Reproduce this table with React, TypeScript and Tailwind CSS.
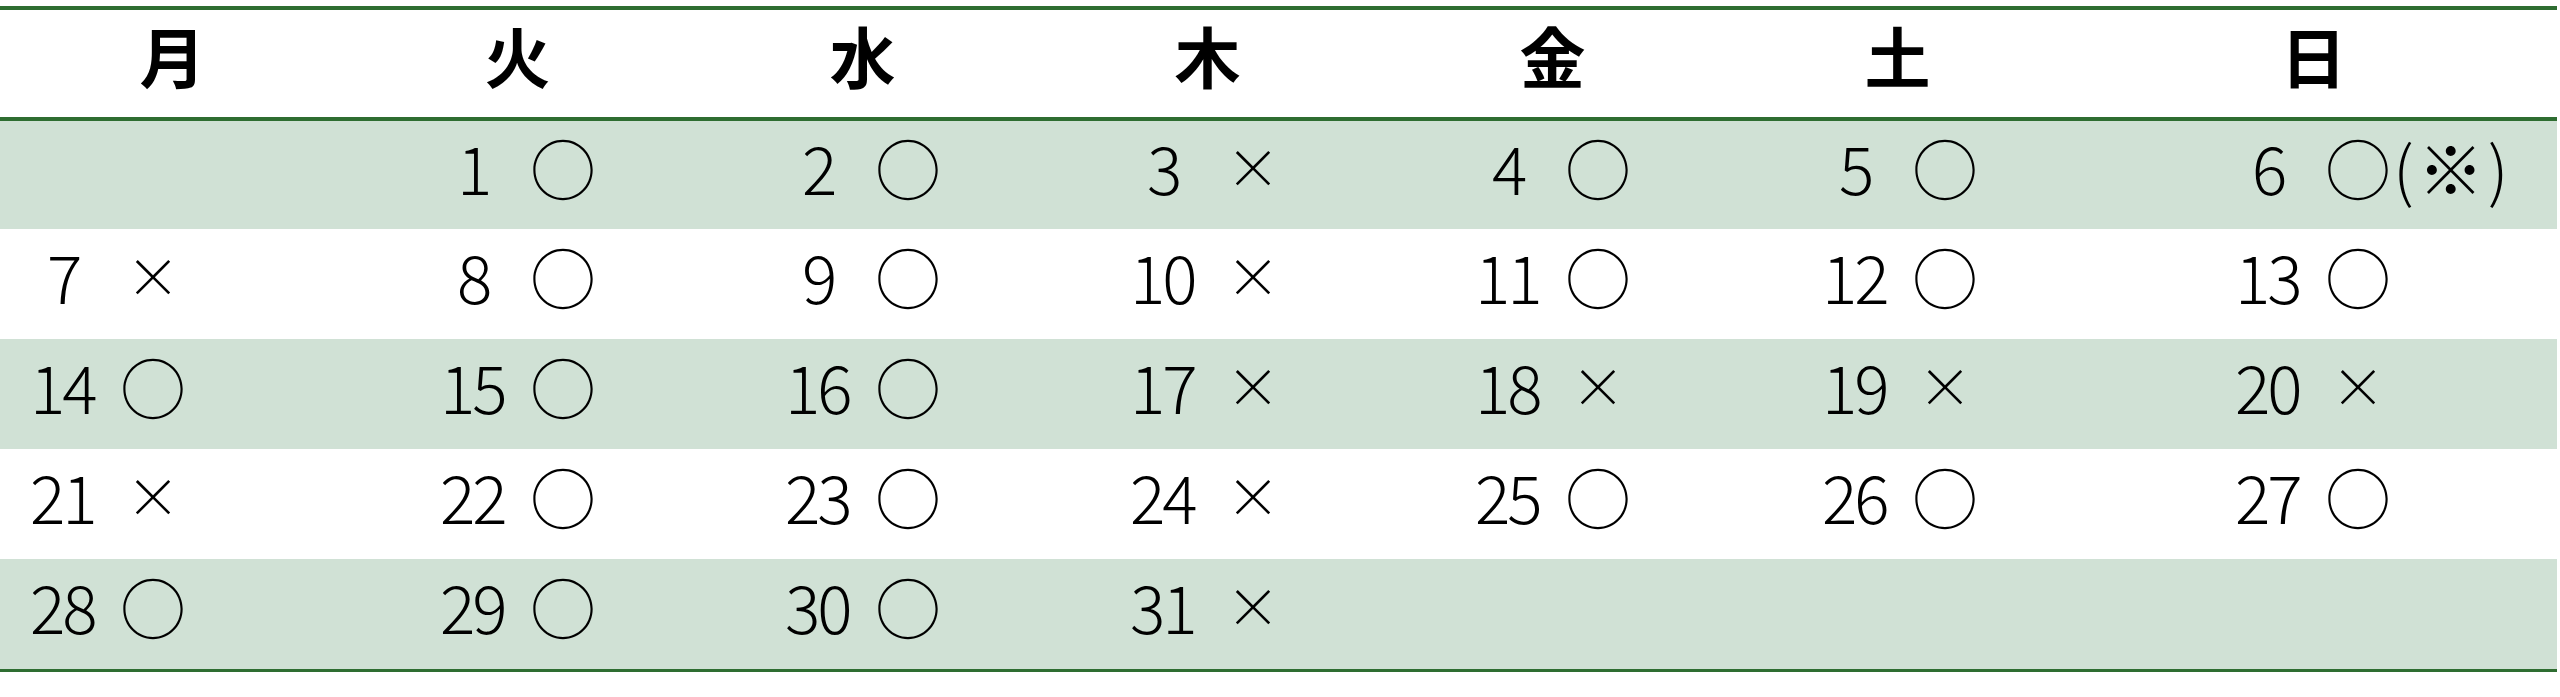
import React from "react";

type Cell = null | { d: number; m: "o" | "x"; note?: string };

const c = (d: number, m: "o" | "x", note?: string): Cell => ({ d, m, note });

const heads = ["月", "火", "水", "木", "金", "土", "日"];

const rows: Cell[][] = [
  [null, c(1, "o"), c(2, "o"), c(3, "x"), c(4, "o"), c(5, "o"), c(6, "o", "(※)")],
  [c(7, "x"), c(8, "o"), c(9, "o"), c(10, "x"), c(11, "o"), c(12, "o"), c(13, "o")],
  [c(14, "o"), c(15, "o"), c(16, "o"), c(17, "x"), c(18, "x"), c(19, "x"), c(20, "x")],
  [c(21, "x"), c(22, "o"), c(23, "o"), c(24, "x"), c(25, "o"), c(26, "o"), c(27, "o")],
  [c(28, "o"), c(29, "o"), c(30, "o"), c(31, "x"), null, null, null],
];

const padCls = [
  "pl-[30px]",
  "pl-[95px]",
  "pl-[95px]",
  "pl-[95px]",
  "pl-[95px]",
  "pl-[97px]",
  "pl-[165px]",
];

function DayCell({ cell, col }: { cell: Cell; col: number }) {
  return (
    <div className={`flex items-center pb-[18px] ${padCls[col]}`}>
      {cell && (
        <div className="flex items-center whitespace-nowrap">
          <span
            className={`inline-block w-[90px] tracking-[-3px] ${
              cell.d < 10 ? "pl-[17px]" : ""
            }`}
          >
            {cell.d}
          </span>
          {cell.m === "o" ? (
            <span className="inline-block w-[66px] text-center">○</span>
          ) : (
            <span className="inline-block w-[66px] text-center text-[54px]">×</span>
          )}
          {cell.note && <span className="ml-[2px] tracking-[4px]">{cell.note}</span>}
        </div>
      )}
    </div>
  );
}

export default function App() {
  return (
    <div className="w-[2560px] h-[697px] bg-white pt-[6px] font-['Noto_Sans_CJK_JP','Noto_Sans_CJK_SC',sans-serif] text-black">
      <div className="w-[2557px] border-t-[4px] border-b-[3px] border-[#2e6d31]">
        <div className="grid grid-cols-[345px_345px_345px_345px_345px_345px_1fr] h-[111px] border-b-[4px] border-[#2e6d31]">
          {heads.map((h) => (
            <div
              key={h}
              className="flex items-center justify-center pb-[20px] text-[66px] font-bold leading-none"
            >
              {h}
            </div>
          ))}
        </div>
        {rows.map((r, i) => (
          <div
            key={i}
            className={`grid grid-cols-[345px_345px_345px_345px_345px_345px_1fr] text-[66px] leading-none font-light ${
              i === 0 ? "h-[108px]" : "h-[110px]"
            } ${i % 2 === 0 ? "bg-[#d0e1d5]" : "bg-white"}`}
          >
            {r.map((cell, j) => (
              <DayCell key={j} cell={cell} col={j} />
            ))}
          </div>
        ))}
      </div>
    </div>
  );
}
